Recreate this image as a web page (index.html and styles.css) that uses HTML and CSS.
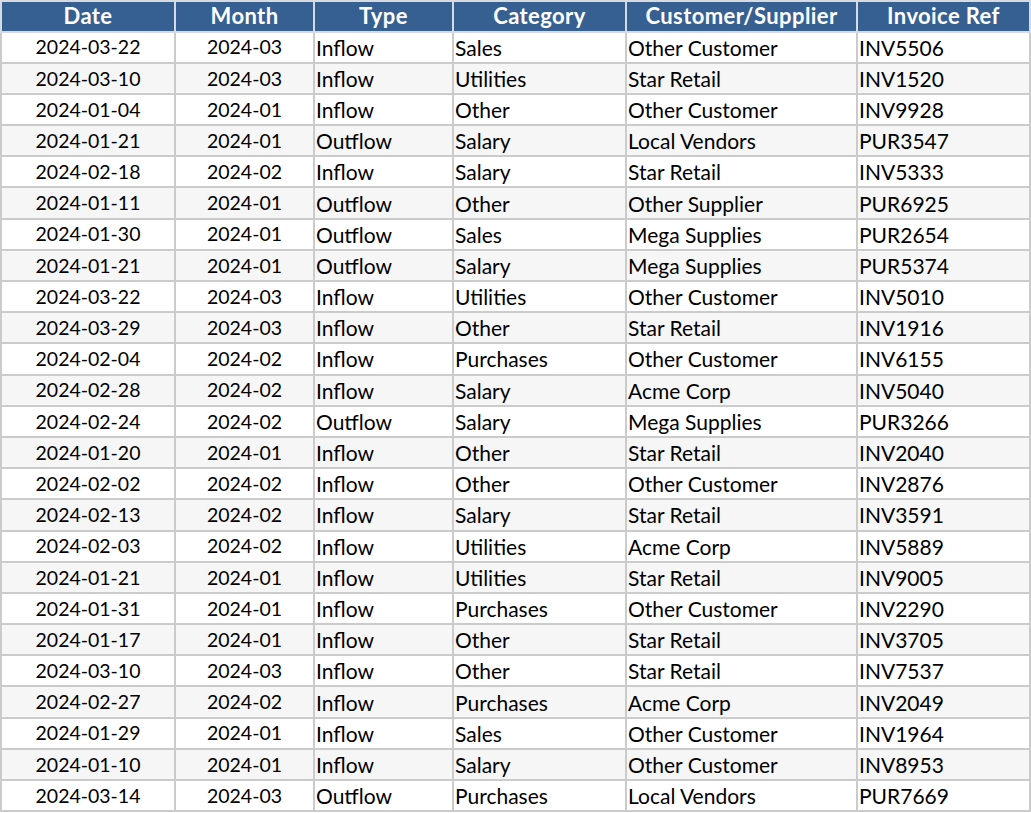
FILE: index.html
```html
<!DOCTYPE html>
<html>
<head>
<meta charset="utf-8">
<link rel="stylesheet" href="styles.css">
</head>
<body>
<table class="sheet">
<colgroup>
<col class="c-date"><col class="c-month"><col class="c-type"><col class="c-cat"><col class="c-cust"><col class="c-inv">
</colgroup>
<thead>
<tr><th>Date</th><th>Month</th><th>Type</th><th>Category</th><th>Customer/Supplier</th><th>Invoice Ref</th></tr>
</thead>
<tbody>
<tr><td class="ctr">2024-03-22</td><td class="ctr">2024-03</td><td>Inflow</td><td>Sales</td><td>Other Customer</td><td>INV5506</td></tr>
<tr><td class="ctr">2024-03-10</td><td class="ctr">2024-03</td><td>Inflow</td><td>Utilities</td><td>Star Retail</td><td>INV1520</td></tr>
<tr><td class="ctr">2024-01-04</td><td class="ctr">2024-01</td><td>Inflow</td><td>Other</td><td>Other Customer</td><td>INV9928</td></tr>
<tr><td class="ctr">2024-01-21</td><td class="ctr">2024-01</td><td>Outflow</td><td>Salary</td><td>Local Vendors</td><td>PUR3547</td></tr>
<tr><td class="ctr">2024-02-18</td><td class="ctr">2024-02</td><td>Inflow</td><td>Salary</td><td>Star Retail</td><td>INV5333</td></tr>
<tr><td class="ctr">2024-01-11</td><td class="ctr">2024-01</td><td>Outflow</td><td>Other</td><td>Other Supplier</td><td>PUR6925</td></tr>
<tr><td class="ctr">2024-01-30</td><td class="ctr">2024-01</td><td>Outflow</td><td>Sales</td><td>Mega Supplies</td><td>PUR2654</td></tr>
<tr><td class="ctr">2024-01-21</td><td class="ctr">2024-01</td><td>Outflow</td><td>Salary</td><td>Mega Supplies</td><td>PUR5374</td></tr>
<tr><td class="ctr">2024-03-22</td><td class="ctr">2024-03</td><td>Inflow</td><td>Utilities</td><td>Other Customer</td><td>INV5010</td></tr>
<tr><td class="ctr">2024-03-29</td><td class="ctr">2024-03</td><td>Inflow</td><td>Other</td><td>Star Retail</td><td>INV1916</td></tr>
<tr><td class="ctr">2024-02-04</td><td class="ctr">2024-02</td><td>Inflow</td><td>Purchases</td><td>Other Customer</td><td>INV6155</td></tr>
<tr><td class="ctr">2024-02-28</td><td class="ctr">2024-02</td><td>Inflow</td><td>Salary</td><td>Acme Corp</td><td>INV5040</td></tr>
<tr><td class="ctr">2024-02-24</td><td class="ctr">2024-02</td><td>Outflow</td><td>Salary</td><td>Mega Supplies</td><td>PUR3266</td></tr>
<tr><td class="ctr">2024-01-20</td><td class="ctr">2024-01</td><td>Inflow</td><td>Other</td><td>Star Retail</td><td>INV2040</td></tr>
<tr><td class="ctr">2024-02-02</td><td class="ctr">2024-02</td><td>Inflow</td><td>Other</td><td>Other Customer</td><td>INV2876</td></tr>
<tr><td class="ctr">2024-02-13</td><td class="ctr">2024-02</td><td>Inflow</td><td>Salary</td><td>Star Retail</td><td>INV3591</td></tr>
<tr><td class="ctr">2024-02-03</td><td class="ctr">2024-02</td><td>Inflow</td><td>Utilities</td><td>Acme Corp</td><td>INV5889</td></tr>
<tr><td class="ctr">2024-01-21</td><td class="ctr">2024-01</td><td>Inflow</td><td>Utilities</td><td>Star Retail</td><td>INV9005</td></tr>
<tr><td class="ctr">2024-01-31</td><td class="ctr">2024-01</td><td>Inflow</td><td>Purchases</td><td>Other Customer</td><td>INV2290</td></tr>
<tr><td class="ctr">2024-01-17</td><td class="ctr">2024-01</td><td>Inflow</td><td>Other</td><td>Star Retail</td><td>INV3705</td></tr>
<tr><td class="ctr">2024-03-10</td><td class="ctr">2024-03</td><td>Inflow</td><td>Other</td><td>Star Retail</td><td>INV7537</td></tr>
<tr><td class="ctr">2024-02-27</td><td class="ctr">2024-02</td><td>Inflow</td><td>Purchases</td><td>Acme Corp</td><td>INV2049</td></tr>
<tr><td class="ctr">2024-01-29</td><td class="ctr">2024-01</td><td>Inflow</td><td>Sales</td><td>Other Customer</td><td>INV1964</td></tr>
<tr><td class="ctr">2024-01-10</td><td class="ctr">2024-01</td><td>Inflow</td><td>Salary</td><td>Other Customer</td><td>INV8953</td></tr>
<tr><td class="ctr">2024-03-14</td><td class="ctr">2024-03</td><td>Outflow</td><td>Purchases</td><td>Local Vendors</td><td>PUR7669</td></tr>
</tbody>
</table>
</body>
</html>
```
FILE: styles.css
```css
html, body {
  margin: 0;
  padding: 0;
  background: #ffffff;
}
.sheet {
  border-collapse: collapse;
  table-layout: fixed;
  width: 1029px;
  font-family: Lato, "Liberation Sans", sans-serif;
  font-size: 21px;
  color: #000;
}
.c-date { width: 174px; }
.c-month { width: 139px; }
.c-type { width: 139px; }
.c-cat { width: 173px; }
.c-cust { width: 231px; }
.c-inv { width: 173px; }
.sheet th {
  background: #376092;
  color: #fff;
  font-weight: bold;
  font-size: 22px;
  letter-spacing: 0.4px;
  text-align: center;
  height: 28.5px;
  padding: 0;
  border: 2px solid #d6dbe2;
  line-height: 1;
}
.sheet td {
  height: 29.2px;
  padding: 0 0 0 1px;
  border: 2px solid #cbcbcb;
  line-height: 1;
  white-space: nowrap;
  overflow: hidden;
}
.sheet td.ctr {
  text-align: center;
  padding: 0;
  font-size: 19.5px;
}
.sheet tbody tr:nth-child(even) td {
  background: #f6f6f6;
}
```
